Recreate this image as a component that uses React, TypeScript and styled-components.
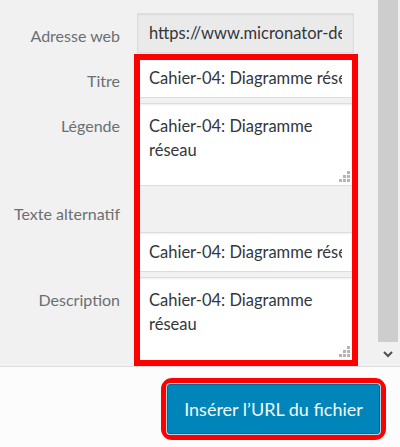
import React from "react";
import styled, { createGlobalStyle } from "styled-components";

const Global = createGlobalStyle`
  html, body { margin: 0; padding: 0; }
  body {
    width: 400px;
    height: 447px;
    overflow: hidden;
    background: #f1f1f1;
    font-family: Lato, "Open Sans", sans-serif;
  }
`;

const FONT = `Lato, "Open Sans", sans-serif`;

const Frame = styled.div`
  width: 400px;
  height: 447px;
  display: flex;
  flex-direction: column;
`;

const Main = styled.div`
  height: 366px;
  display: flex;
  background: #f1f1f1;
  border-bottom: 1px solid #dddddd;
`;

const Content = styled.div`
  flex: 1;
  position: relative;
  padding: 13px 24px 0 0;
  display: flex;
  flex-direction: column;
  gap: 5px;
`;

const Row = styled.div`
  display: grid;
  grid-template-columns: 120px 217px;
  column-gap: 17px;
  align-items: start;
`;

const Label = styled.label`
  text-align: right;
  padding-top: 13px;
  font-size: 16px;
  line-height: 20px;
  color: #6b6f74;
`;

const Field = styled.div<{ $offset?: number }>`
  position: relative;
  padding-top: ${(p) => p.$offset ?? 0}px;
`;

const TextInput = styled.input<{ $muted?: boolean }>`
  box-sizing: border-box;
  display: block;
  width: 100%;
  height: 40px;
  margin: 0;
  padding: 0 11px;
  border: 1px solid #dddddd;
  border-radius: 0;
  box-shadow: inset 0 1px 2px rgba(0, 0, 0, 0.07);
  background: ${(p) => (p.$muted ? "#eaeaea" : "#ffffff")};
  color: #32373c;
  font-family: ${FONT};
  font-size: 16.5px;
  outline: none;
`;

const TextArea = styled.textarea<{ $height: number }>`
  box-sizing: border-box;
  display: block;
  width: 100%;
  height: ${(p) => p.$height}px;
  margin: 0;
  padding: 10px 11px;
  border: 1px solid #dddddd;
  border-radius: 0;
  box-shadow: inset 0 1px 2px rgba(0, 0, 0, 0.07);
  background: #ffffff;
  color: #32373c;
  font-family: ${FONT};
  font-size: 16.5px;
  line-height: 24px;
  resize: none;
  overflow: hidden;
  outline: none;
`;

const Grip = styled.svg`
  position: absolute;
  right: 4px;
  bottom: 4px;
`;

const Highlight = styled.div`
  position: absolute;
  left: 134px;
  top: 54px;
  width: 224px;
  height: 312px;
  box-sizing: border-box;
  border: 6px solid #ff0000;
  pointer-events: none;
`;

const Scrollbar = styled.div`
  width: 22px;
  display: flex;
  flex-direction: column;
  background: #f1f1f1;
`;

const Thumb = styled.div`
  flex: 1;
  background: #cdcdcd;
  margin-right: 2px;
`;

const ArrowButton = styled.div`
  height: 24px;
  display: flex;
  align-items: center;
  justify-content: center;
  padding-right: 2px;
`;

const Footer = styled.div`
  flex: 1;
  background: #fcfcfc;
  display: flex;
  justify-content: flex-end;
  align-items: flex-start;
  padding: 11px 14px 0 0;
`;

const ButtonRing = styled.div`
  display: flex;
  border: 6px solid #ff0000;
  border-radius: 11px;
`;

const PrimaryButton = styled.button`
  width: 213px;
  height: 50px;
  padding: 0;
  margin: 0;
  background: #0085ba;
  border: 1px solid #006799;
  border-radius: 3px;
  box-shadow: 0 0 0 1px #b7d3e2;
  color: #f4f9fb;
  font-family: ${FONT};
  font-size: 18px;
  cursor: pointer;
`;

function ResizeGrip() {
  const dots = [
    [8, 0],
    [4, 4],
    [8, 4],
    [0, 8],
    [4, 8],
    [8, 8],
  ];
  return (
    <Grip width="11" height="11" viewBox="0 0 11 11">
      {dots.map(([x, y]) => (
        <rect key={`${x}-${y}`} x={x} y={y} width="3" height="3" fill="#b4b4b4" />
      ))}
    </Grip>
  );
}

const TEXT = "Cahier-04: Diagramme réseau";

export default function App() {
  return (
    <Frame>
      <Global />
      <Main>
        <Content>
          <Row>
            <Label>Adresse web</Label>
            <Field>
              <TextInput $muted readOnly value="https://www.micronator-dev.org/wp-content/uploads/cahier-04.png" />
            </Field>
          </Row>
          <Row>
            <Label>Titre</Label>
            <Field>
              <TextInput readOnly value={TEXT} />
            </Field>
          </Row>
          <Row>
            <Label>Légende</Label>
            <Field>
              <TextArea $height={83} readOnly value={TEXT} />
              <ResizeGrip />
            </Field>
          </Row>
          <Row>
            <Label>Texte alternatif</Label>
            <Field $offset={41}>
              <TextInput readOnly value={TEXT} />
            </Field>
          </Row>
          <Row>
            <Label>Description</Label>
            <Field>
              <TextArea $height={84} readOnly value={TEXT} />
              <ResizeGrip />
            </Field>
          </Row>
          <Highlight />
        </Content>
        <Scrollbar>
          <Thumb />
          <ArrowButton>
            <svg width="10" height="7" viewBox="0 0 10 7">
              <path d="M1 1 L5 5 L9 1" fill="none" stroke="#505050" strokeWidth="2" />
            </svg>
          </ArrowButton>
        </Scrollbar>
      </Main>
      <Footer>
        <ButtonRing>
          <PrimaryButton>Insérer l’URL du fichier</PrimaryButton>
        </ButtonRing>
      </Footer>
    </Frame>
  );
}
